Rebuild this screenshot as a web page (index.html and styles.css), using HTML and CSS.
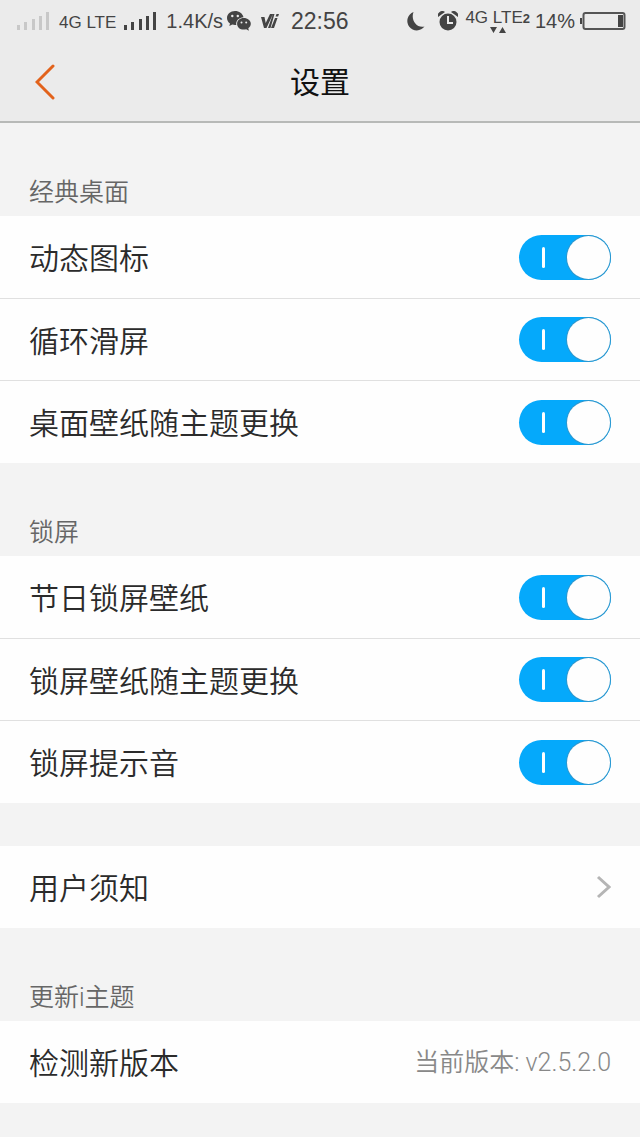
FILE: index.html
```html
<!DOCTYPE html>
<html lang="zh-CN">
<head>
    <meta charset="UTF-8">
    <meta name="viewport" content="width=device-width, initial-scale=1.0">
    <title>设置</title>
    <link rel="stylesheet" href="styles.css">
</head>
<body>
    <header class="top">
        <div class="status-bar">
            <div class="status-group">
                <svg class="signal signal-off" width="33" height="20" viewBox="0 0 33 20" aria-hidden="true">
                    <path d="M0 14h3v5H0zM7 11h3v8H7zM15 8h3v11h-3zM22 5h3v14h-3zM29 1h3v18h-3z"/>
                </svg>
                <span class="network">4G LTE</span>
                <svg class="signal" width="33" height="20" viewBox="0 0 33 20" aria-hidden="true">
                    <path d="M0 14h3v5H0zM7 11h3v8H7zM15 8h3v11h-3zM22 5h3v14h-3zM29 1h3v18h-3z"/>
                </svg>
                <span class="speed">1.4K/s</span>
                <svg class="wechat" width="24" height="20" viewBox="0 0 24 20" aria-hidden="true">
                    <path d="M8 0C3.500 0 0 3.100 0 7c0 2.200 1.100 4.200 3 5.500L2.300 15l3-1.500c.9.300 1.700.500 2.700.500h1.300c-.8-4.300 2.800-7.600 7.200-7.800C15.600 2.500 12.300 0 8 0z"/>
                    <path d="M16.700 7c-3.900 0-6.600 2.500-6.600 5.700s2.700 5.900 6.600 5.900c.9 0 1.700-.1 2.500-.4l2.700 1.500-.6-2.500c1.600-1.100 2.500-2.700 2.500-4.500 0-3.200-3.200-5.700-7.100-5.700z"/>
                    <g class="eyes">
                        <circle cx="5.300" cy="5" r="1.200"/>
                        <circle cx="10.800" cy="5" r="1.200"/>
                        <circle cx="14.500" cy="11.500" r="1"/>
                        <circle cx="19.200" cy="11.500" r="1"/>
                    </g>
                </svg>
                <svg class="vlogo" width="18" height="16" viewBox="0 0 18 16" aria-hidden="true">
                    <path d="M0 4h3.500l1.200 6L9 1h3L5.500 15H3zM12 1h1.500L9.500 15H7zM14 5h2.500L13 15h-3zM15.500 1H18l-.9 2.500h-2.500z"/>
                </svg>
                <span class="time">22:56</span>
            </div>
            <div class="status-group">
                <svg class="moon" width="18" height="20" viewBox="0 0 18 20" aria-hidden="true">
                    <path d="M6.500 1A9.500 9.500 0 1 0 17.500 15.500C9.500 17.500 3.500 9 6.500 1z"/>
                </svg>
                <svg class="alarm" width="20" height="20" viewBox="0 0 20 20" aria-hidden="true">
                    <circle cx="10" cy="11" r="8.500"/>
                    <path d="M0 6a4.500 4.500 0 0 1 7-5zM20 6a4.500 4.500 0 0 0-7-5z"/>
                    <path class="hands" d="M10 5v7h5"/>
                </svg>
                <span class="network2">
                    <span>4G LTE<b>2</b></span>
                    <svg width="16" height="6" viewBox="0 0 16 6" aria-hidden="true">
                        <path d="M0 0h7L3.500 6zM9 6h7l-3.500-6z"/>
                    </svg>
                </span>
                <span class="percent">14%</span>
                <svg class="battery" width="46" height="20" viewBox="0 0 46 20" aria-hidden="true">
                    <rect class="shell" x="3.500" y="2" width="41" height="16" rx="2"/>
                    <path d="M0 7h2v6H0zM38 4h5v12h-5z"/>
                </svg>
            </div>
        </div>
        <nav class="nav-bar">
            <a class="back" href="#" aria-label="返回">
                <svg width="20" height="36" viewBox="0 0 20 36" aria-hidden="true">
                    <path d="M18 2L2 18l16 16"/>
                </svg>
            </a>
            <h1>设置</h1>
        </nav>
    </header>

    <main>
        <section>
            <h2>经典桌面</h2>
            <div class="list">
                <label class="row">
                    <span>动态图标</span>
                    <input type="checkbox" class="switch" checked>
                </label>
                <label class="row">
                    <span>循环滑屏</span>
                    <input type="checkbox" class="switch" checked>
                </label>
                <label class="row">
                    <span>桌面壁纸随主题更换</span>
                    <input type="checkbox" class="switch" checked>
                </label>
            </div>
        </section>

        <section>
            <h2>锁屏</h2>
            <div class="list">
                <label class="row">
                    <span>节日锁屏壁纸</span>
                    <input type="checkbox" class="switch" checked>
                </label>
                <label class="row">
                    <span>锁屏壁纸随主题更换</span>
                    <input type="checkbox" class="switch" checked>
                </label>
                <label class="row">
                    <span>锁屏提示音</span>
                    <input type="checkbox" class="switch" checked>
                </label>
            </div>
        </section>

        <section class="plain">
            <div class="list">
                <a class="row" href="#">
                    <span>用户须知</span>
                    <svg class="arrow" width="15" height="24" viewBox="0 0 15 24" aria-hidden="true">
                        <path d="M2 2l11 10L2 22"/>
                    </svg>
                </a>
            </div>
        </section>

        <section>
            <h2>更新i主题</h2>
            <div class="list">
                <a class="row" href="#">
                    <span>检测新版本</span>
                    <span class="version">当前版本: v2.5.2.0</span>
                </a>
            </div>
        </section>
    </main>
</body>
</html>
```
FILE: styles.css
```css
* {
    margin: 0;
    padding: 0;
    box-sizing: border-box;
}

body {
    font-family: Roboto, "Noto Sans CJK SC", sans-serif;
    font-weight: 350;
    background: #f3f3f3;
    color: #2b2b2b;
    min-height: 100vh;
}

.top {
    background: #ebebeb;
    border-bottom: 2px solid #b7b9b7;
}

/* status bar */
.status-bar {
    display: flex;
    justify-content: space-between;
    height: 42px;
    padding: 0 14px 0 17px;
    font-family: "Liberation Sans", Arial, sans-serif;
    font-weight: 400;
    color: #444;
}

.status-group {
    display: flex;
    align-items: center;
    white-space: nowrap;
}

.status-bar svg {
    fill: #444;
    flex: none;
}

.status-bar .signal-off {
    fill: #c8c8c8;
}

.network {
    font-size: 17px;
    margin: 4px 8px 0 9px;
}

.speed {
    font-size: 20px;
    margin: 0 4px 0 9px;
}

.wechat .eyes {
    fill: #ebebeb;
}

.vlogo {
    margin: 0 12px 0 10px;
}

.time {
    font-size: 23px;
}

.moon {
    margin-right: 13px;
}

.status-bar .hands {
    fill: none;
    stroke: #ebebeb;
    stroke-width: 2;
}

.network2 {
    display: flex;
    flex-direction: column;
    align-items: center;
    font-size: 17px;
    line-height: 16px;
    margin: 0 5px 0 7px;
}

.network2 b {
    font-size: 13px;
}

.percent {
    font-size: 20px;
    margin-right: 5px;
}

.battery .shell {
    fill: none;
    stroke: #555;
    stroke-width: 2;
}

/* title */
.nav-bar {
    display: grid;
    grid-template-columns: 1fr auto 1fr;
    align-items: center;
    height: 79px;
    padding: 0 35px;
}

.back {
    justify-self: start;
    display: flex;
}

.back svg {
    fill: none;
    stroke: #e2621b;
    stroke-width: 3;
    stroke-linecap: round;
}

h1 {
    padding-bottom: 4px;
    font-size: 30px;
    font-weight: 400;
    color: #111;
}

/* settings */
h2 {
    display: flex;
    align-items: flex-end;
    height: 93px;
    padding: 0 29px 8px;
    font-size: 25px;
    line-height: 30px;
    font-weight: 350;
    color: #666;
}

.plain {
    padding-top: 43px;
}

.list {
    background: #fefefe;
}

.row {
    display: flex;
    align-items: center;
    justify-content: space-between;
    height: 82px;
    padding: 0 29px;
    font-size: 30px;
    color: inherit;
    text-decoration: none;
}

.row:first-child:not(:only-child) {
    height: 82px;
}

.row + .row {
    height: 83px;
    border-top: 1px solid #e0e0e0;
}

.row:nth-child(2) {
    height: 82px;
}

.row span {
    padding-bottom: 2px;
}

.switch {
    appearance: none;
    display: flex;
    align-items: center;
    justify-content: space-between;
    width: 92px;
    height: 45px;
    padding: 0 1px 0 23px;
    border-radius: 23px;
    background: #d0d0d0;
}

.switch:checked {
    background: #05a9fb;
}

.switch::before {
    content: "";
    width: 3px;
    height: 21px;
    border-radius: 2px;
    background: #fefefe;
}

.switch::after {
    content: "";
    width: 43px;
    height: 43px;
    border-radius: 50%;
    background: #fefefe;
    box-shadow: 0 0 0 1px #2f97cd;
}

.arrow {
    fill: none;
    stroke: #b5b5b5;
    stroke-width: 3;
}

.row .version {
    padding-bottom: 4px;
    font-size: 25px;
    color: #888;
}
```
